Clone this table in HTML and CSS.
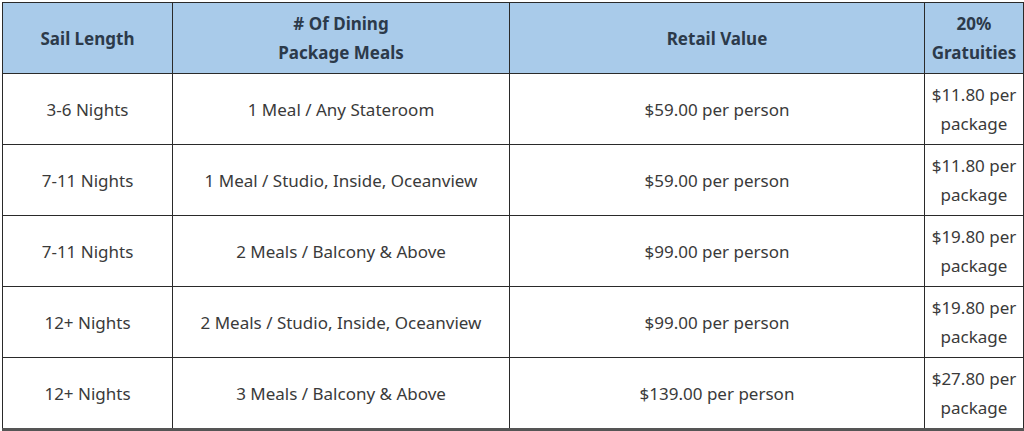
FILE: index.html
```html
<!DOCTYPE html>
<html>
<head>
<meta charset="utf-8">
<link rel="stylesheet" href="styles.css">
</head>
<body>
<table class="meals">
  <colgroup>
    <col class="c1"><col class="c2"><col class="c3"><col class="c4">
  </colgroup>
  <thead>
    <tr>
      <th>Sail Length</th>
      <th># Of Dining<br>Package Meals</th>
      <th>Retail Value</th>
      <th>20%<br>Gratuities</th>
    </tr>
  </thead>
  <tbody>
    <tr><td>3-6 Nights</td><td>1 Meal / Any Stateroom</td><td>$59.00 per person</td><td>$11.80 per package</td></tr>
    <tr><td>7-11 Nights</td><td>1 Meal / Studio, Inside, Oceanview</td><td>$59.00 per person</td><td>$11.80 per package</td></tr>
    <tr><td>7-11 Nights</td><td>2 Meals / Balcony &amp; Above</td><td>$99.00 per person</td><td>$19.80 per package</td></tr>
    <tr><td>12+ Nights</td><td>2 Meals / Studio, Inside, Oceanview</td><td>$99.00 per person</td><td>$19.80 per package</td></tr>
    <tr><td>12+ Nights</td><td>3 Meals / Balcony &amp; Above</td><td>$139.00 per person</td><td>$27.80 per package</td></tr>
  </tbody>
</table>
</body>
</html>
```
FILE: styles.css
```css
html, body {
  margin: 0;
  padding: 0;
  background: #ffffff;
}
body {
  padding: 2px 0 0 2px;
  font-family: "Noto Sans", "Open Sans", sans-serif;
  font-size: 17px;
  color: #3a3a3a;
}
.meals {
  width: 1021px;
  table-layout: fixed;
  border-collapse: collapse;
  border-bottom: 3px solid #555;
}
.c1 { width: 170px; }
.c2 { width: 337px; }
.c3 { width: 415px; }
.c4 { width: 99px; }
.meals th,
.meals td {
  border: 1.5px solid #2a2a2a;
  text-align: center;
  vertical-align: middle;
  line-height: 29px;
  padding: 6px 3px;
  height: 58px;
  box-sizing: content-box;
}
.meals th {
  background: #a9cbea;
  color: #2c3a4a;
  font-weight: 700;
}
```
